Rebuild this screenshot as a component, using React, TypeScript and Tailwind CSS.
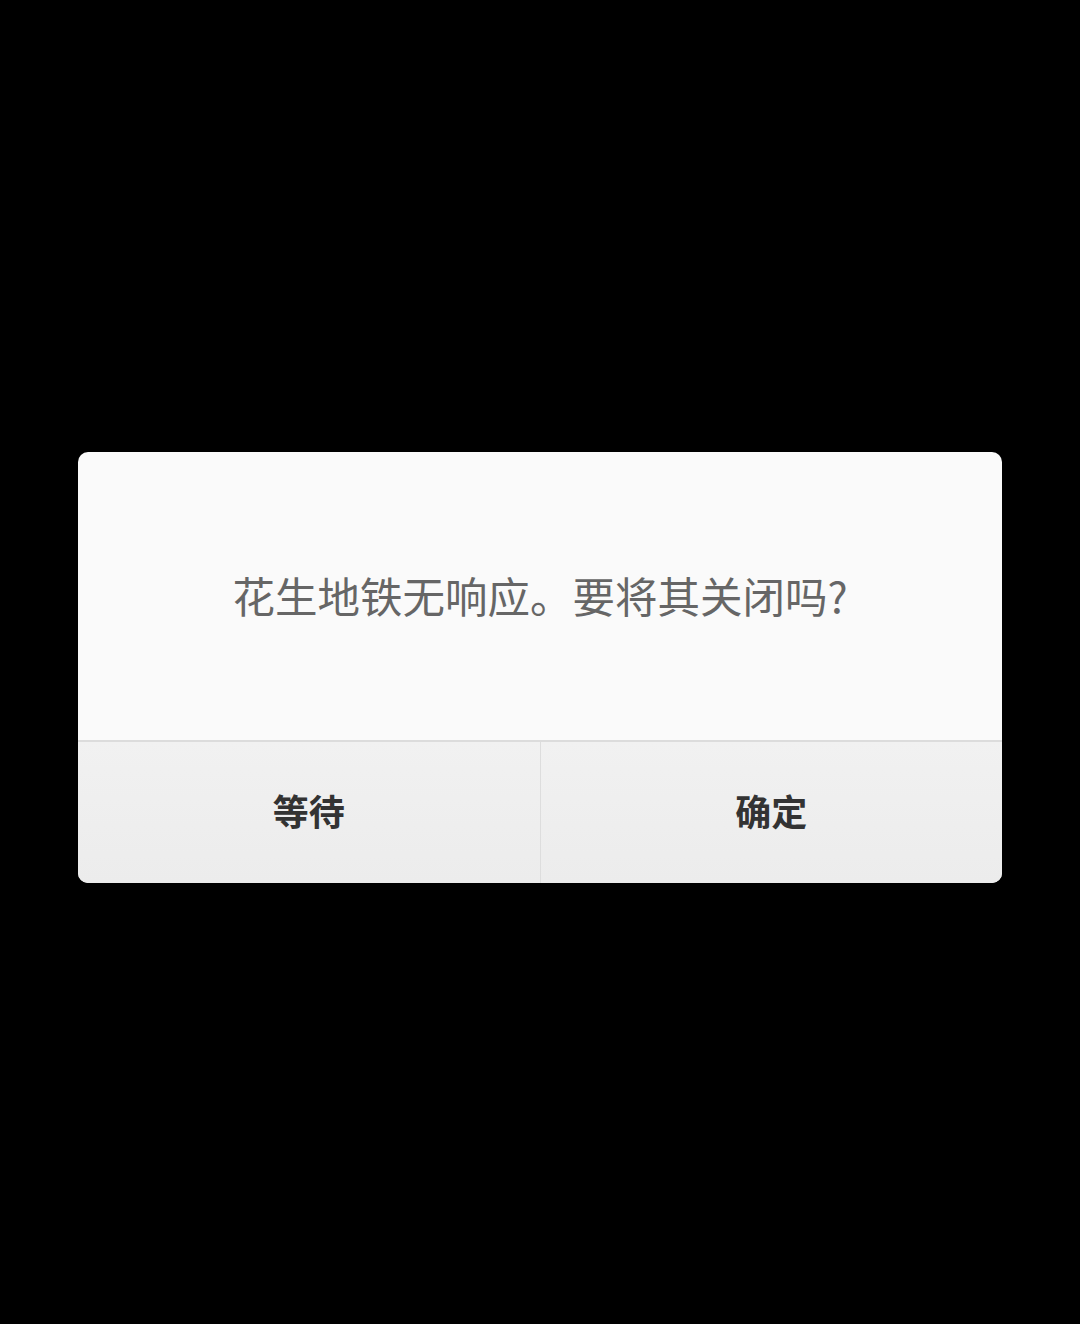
export default function App() {
  return (
    <div
      className="w-[1080px] h-[1324px] bg-black flex items-start justify-center pt-[452px]"
      style={{ fontFamily: '"Noto Sans CJK SC", "Noto Sans", sans-serif' }}
    >
      <div className="w-[924px] h-[431px] rounded-[10px] overflow-hidden bg-[#fafafa] flex flex-col">
        <div className="h-[288px] flex items-center justify-center">
          <p className="text-[42.5px] leading-none text-[#666666] pb-[2px]">花生地铁无响应。要将其关闭吗?</p>
        </div>
        <div className="flex-1 flex border-t-2 border-[#dcdcdc] bg-gradient-to-b from-[#f1f1f1] to-[#ececec]">
          <button className="flex-1 flex items-center justify-center pb-[5px] text-[36px] font-bold text-[#333333] border-r border-[#dddddd]">
            等待
          </button>
          <button className="flex-1 flex items-center justify-center pb-[5px] text-[36px] font-bold text-[#333333]">
            确定
          </button>
        </div>
      </div>
    </div>
  )
}
